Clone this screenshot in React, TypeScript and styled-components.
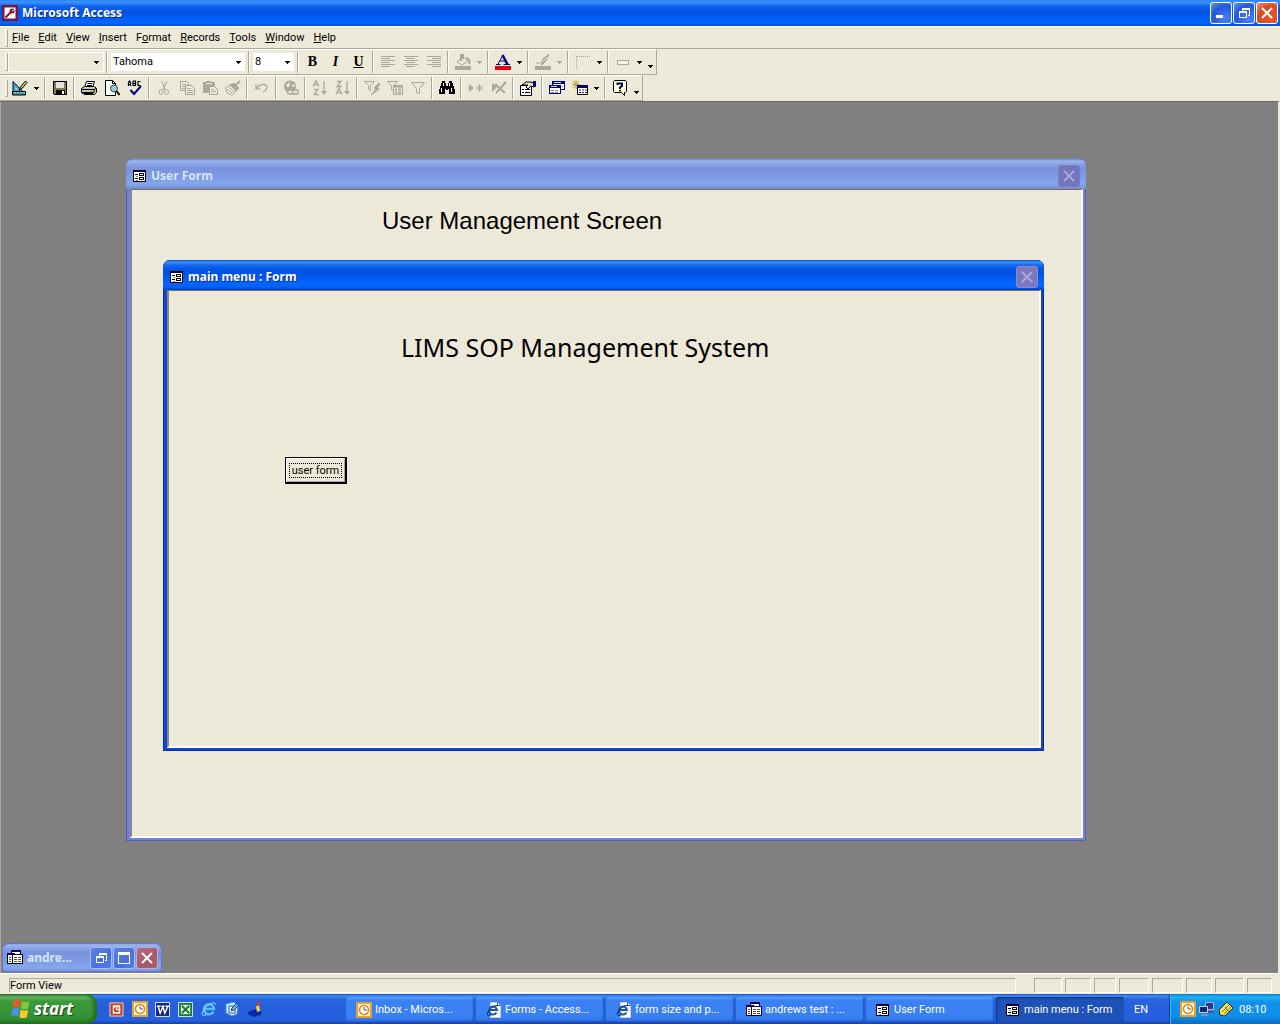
import React from 'react';
import styled, { createGlobalStyle, css } from 'styled-components';

const face = '#ece9d8';
const shade = '#aca899';
const ui = 'Roboto, "Liberation Sans", sans-serif';
const caption = '"Noto Sans", "Open Sans", sans-serif';

const GlobalStyle = createGlobalStyle`
  *, *::before, *::after { box-sizing: border-box; }
  body { margin: 0; font: 11px/14px ${ui}; color: #000; background: ${face}; }
  button, select { font: inherit; color: inherit; }
  svg { display: block; flex: none; }
`;

const Desktop = styled.div`
  display: grid;
  grid-template-rows: auto auto auto auto 1fr auto auto;
  min-height: 100vh;
`;

/* ---------- captions ---------- */

const activeCaption = 'linear-gradient(#0a4ac8 0, #3a95ff 2px, #1768ec 5px, #0054e3 10px, #0055e8 15px, #0366ff 23px, #0462f8 27px, #0040c8 100%)';
const inactiveCaption = 'linear-gradient(#7389d8 0, #9ab6ee 2px, #8fa9e8 4px, #7a95de 9px, #7c97e0 15px, #84a7ec 24px, #7f9ce4 27px, #7886c8 100%)';

const AppCaption = styled.header`
  display: flex;
  align-items: center;
  gap: 4px;
  height: 26px;
  padding: 0 2px;
  background: linear-gradient(#2a83f6 0, #3b96ff 2px, #1464ea 6px, #0054e3 12px, #0366ff 23px, #0048d0 100%);
`;

const CaptionText = styled.h1<{ $faded?: boolean }>`
  flex: 1;
  margin: 0;
  font: bold 12px/16px ${caption};
  color: ${p => (p.$faded ? '#d8e4f8' : '#fff')};
  text-shadow: ${p => (p.$faded ? 'none' : '1px 1px #0a2a80')};
  white-space: nowrap;
`;

const CaptionButtons = styled.div<{ $tight?: boolean }>`
  display: flex;
  gap: ${p => (p.$tight ? 1 : 2)}px;
`;

const tones = {
  blue: css`background: radial-gradient(circle at 75% 80%, #4a80fa, #2458dc 60%, #6a94f2); border-color: #fff;`,
  red: css`background: radial-gradient(circle at 70% 80%, #e85a2c, #d84a20 60%, #f09a80); border-color: #fff;`,
  soft: css`background: linear-gradient(135deg, #5d82e2, #4670e0 60%, #5280ea); border-color: #a8bcf2;`,
  softRed: css`background: linear-gradient(135deg, #b86c82, #a85868 60%, #b05c60); border-color: #b8aade;`,
  off: css`background: #7b78c0; border-color: #8c8ad0;`,
  offFaded: css`background: #7476bc; border-color: #7a7cc4;`,
};

const CaptionButton = styled.button<{ $tone: keyof typeof tones }>`
  display: grid;
  place-items: center;
  width: 22px;
  height: 22px;
  padding: 0;
  border: 1px solid;
  border-radius: 3px;
  ${p => tones[p.$tone]}
`;

/* ---------- menu and tool bars ---------- */

const Strip = styled.div`
  background: ${face};
`;

const MenuBar = styled.nav`
  display: flex;
  align-items: center;
  height: 23px;
  padding-left: 5px;
  border-top: 1px solid #fff;
  border-bottom: 1px solid ${shade};
`;

const Grip = styled.span`
  width: 3px;
  height: 18px;
  border: 1px solid;
  border-color: #fff ${shade} ${shade} #fff;
`;

const MenuItem = styled.button`
  padding: 3px 5px 2px 4px;
  border: 0;
  background: none;
  u { text-underline-offset: 1px; }
`;

const ToolBar = styled.div`
  display: flex;
  align-items: center;
  width: fit-content;
  height: 26px;
  padding-left: 5px;
  border-top: 1px solid #fff;
  border-right: 1px solid ${shade};
  border-bottom: 1px solid ${shade};
`;

const Divider = styled.span`
  width: 2px;
  height: 22px;
  margin: 0 2px;
  border-left: 1px solid ${shade};
  border-right: 1px solid #fff;
`;

const ToolButton = styled.button`
  display: grid;
  place-items: center;
  width: 23px;
  height: 22px;
  padding: 0;
  border: 0;
  background: none;
`;

const Letter = styled.span<{ $kind: 'b' | 'i' | 'u' }>`
  font: bold 14px/16px "Liberation Serif", serif;
  font-style: ${p => (p.$kind === 'i' ? 'italic' : 'normal')};
  text-decoration: ${p => (p.$kind === 'u' ? 'underline' : 'none')};
`;

const DropButton = styled.button<{ $low?: boolean }>`
  display: grid;
  place-items: center;
  width: 11px;
  height: 22px;
  padding: ${p => (p.$low ? '8px 0 0' : '0')};
  border: 0;
  background: none;
`;

const Combo = styled.label<{ $size: number; $empty?: boolean }>`
  display: flex;
  align-items: center;
  width: ${p => p.$size}px;
  height: 20px;
  padding-right: 4px;
  border: 1px solid ${p => (p.$empty ? '#fff' : face)};
  background: ${p => (p.$empty ? face : '#fff')};
  select {
    flex: 1;
    min-width: 0;
    padding: 0 2px;
    border: 0;
    appearance: none;
    background: none;
  }
`;

/* ---------- MDI area ---------- */

const Workspace = styled.main`
  position: relative;
  min-height: 600px;
  background: #808080;
  border: 1px solid #6e6c64;
  border-left-color: ${shade};
  border-right: 2px solid ${face};
  border-bottom: 0;
  overflow: hidden;
`;

const Frame = styled.section<{ $x: number; $y: number; $w: number; $h: number; $active?: boolean }>`
  position: absolute;
  left: ${p => p.$x}px;
  top: ${p => p.$y}px;
  width: ${p => p.$w}px;
  height: ${p => p.$h}px;
  display: flex;
  flex-direction: column;
  padding: 0 3px 3px 4px;
  border-radius: 7px 7px 0 0;
  background: ${p => (p.$active ? '#0f46d8' : '#7480dc')};
  box-shadow: inset 0 0 0 1px ${p => (p.$active ? '#0a2ca0' : '#5560b4')};
`;

const FrameCaption = styled.header<{ $active?: boolean }>`
  display: flex;
  align-items: center;
  gap: 5px;
  flex: none;
  height: 30px;
  margin: 0 -3px 0 -4px;
  padding: 3px 6px 0 7px;
  border-radius: 7px 7px 0 0;
  background: ${p => (p.$active ? activeCaption : inactiveCaption)};
`;

const Surface = styled.div`
  flex: 1;
  background: ${face};
  border: 1px solid #716f64;
  border-left-width: 2px;
  border-left-color: #8a8880;
  border-right: 2px solid #fff;
  border-bottom: 2px solid #fff;
`;

const UserFormBody = styled(Surface)`
  padding: 15px 0 0 250px;
`;

const MenuFormBody = styled(Surface)`
  display: flex;
  flex-direction: column;
  align-items: flex-start;
  gap: 92px;
  padding: 38px 0 0 116px;
`;

const UserHeading = styled.h2`
  margin: 0;
  font: 24px/32px "Liberation Sans", Arial, sans-serif;
`;

const MenuHeading = styled.h2`
  margin: 0 0 0 116px;
  font: 25px/36px ${caption};
`;

const PushButton = styled.button`
  width: 62px;
  height: 27px;
  padding: 3px 3px 2px;
  border: 1px solid #000;
  border-right-width: 2px;
  border-bottom-width: 2px;
  background: ${face};
  box-shadow: inset 1px 1px #fff, inset -1px -1px ${shade};
  span {
    display: block;
    border: 1px dotted #000;
    line-height: 13px;
    white-space: nowrap;
  }
`;

const Minimized = styled.section`
  position: absolute;
  left: 1px;
  bottom: 1px;
  display: flex;
  align-items: center;
  gap: 4px;
  width: 160px;
  height: 29px;
  padding: 0 4px 0 5px;
  border-radius: 7px 7px 4px 4px;
  background: ${inactiveCaption};
  box-shadow: inset 0 0 0 1px #6674cc;
`;

/* ---------- status bar ---------- */

const StatusBar = styled.footer`
  display: flex;
  gap: 3px;
  height: 21px;
  padding: 4px 8px 1px 9px;
  border-top: 1px solid #fff;
  background: ${face};
`;

const Panel = styled.span<{ $size?: number }>`
  flex: ${p => (p.$size ? `0 0 ${p.$size}px` : '1')};
  margin-right: ${p => (p.$size ? 0 : 15)}px;
  border: 1px solid;
  border-color: ${shade} #fff #fff ${shade};
`;

/* ---------- task bar ---------- */

const TaskBar = styled.footer`
  display: flex;
  height: 30px;
  color: #fff;
  background: linear-gradient(#1f4fc0 0, #3f8cf3 2px, #2a65e0 5px, #245edb 15px, #2562df 26px, #1941a5 100%);
`;

const StartButton = styled.button`
  display: flex;
  align-items: center;
  gap: 4px;
  width: 97px;
  padding: 0 0 1px 10px;
  border: 0;
  border-radius: 0 10px 10px 0;
  background: linear-gradient(#2f7a30 0, #66b566 3px, #3d9a3c 7px, #359435 20px, #2f8a2e 26px, #226b22 100%);
  box-shadow: inset -3px 0 4px #21691f;
  font: italic bold 17px/20px ${caption};
  text-shadow: 1px 1px 1px #173f16;
`;

const QuickLaunch = styled.div`
  display: flex;
  align-items: center;
  width: 249px;
  padding-left: 8px;
`;

const LaunchButton = styled.button`
  display: grid;
  place-items: center;
  width: 23px;
  height: 24px;
  padding: 0;
  border: 0;
  background: none;
`;

const Tasks = styled.div`
  display: flex;
  flex: 1;
  gap: 2px;
  min-width: 0;
  padding: 3px 0 2px;
`;

const Task = styled.button<{ $active?: boolean }>`
  display: flex;
  align-items: center;
  gap: 3px;
  flex: 0 1 128px;
  min-width: 0;
  padding: 0 8px 0 10px;
  border: 0;
  border-radius: 3px;
  overflow: hidden;
  white-space: nowrap;
  background: ${p => (p.$active ? '#1e52b7' : 'linear-gradient(#5a9bff 0, #3c81f3 4px, #3980f4 20px, #2f6fe0 100%)')};
  box-shadow: ${p => (p.$active ? 'inset 1px 1px 2px #0e2f7c' : 'inset -1px -1px 1px #2357c8')};
`;

const SmallIcon = styled.span`
  margin-right: 2px;
`;

const Language = styled.span`
  width: 45px;
  padding: 9px 0 0 10px;
`;

const Tray = styled.div`
  display: flex;
  align-items: center;
  gap: 3px;
  width: 111px;
  padding-left: 10px;
  border-left: 1px solid #0f3d9c;
  background: linear-gradient(#0d79c8 0, #1cb4f6 3px, #1290e9 8px, #0f8eea 22px, #0b6cc4 100%);
  box-shadow: inset 1px 0 #3ab8f8;
  time { margin: 2px 0 0 2px; }
`;

/* ---------- drawings ---------- */

const grey = '#aca899';
const navy = '#000080';

type ArtProps = { children: React.ReactNode; s?: number; smooth?: boolean };
const Art = ({ children, s = 16, smooth }: ArtProps) => (
  <svg width={s} height={s} viewBox="0 0 16 16" fill="none" shapeRendering={smooth ? 'auto' : 'crispEdges'} aria-hidden="true">
    {children}
  </svg>
);

const Caret = ({ c = '#000' }: { c?: string }) => (
  <svg width="5" height="3" viewBox="0 0 5 3" shapeRendering="crispEdges" aria-hidden="true">
    <path d="M0 0h5v1H4v1H3v1H2V2H1V1H0z" fill={c} />
  </svg>
);

const Cross = ({ c = '#fff' }: { c?: string }) => (
  <Art smooth><path d="M3 3l10 10M13 3L3 13" stroke={c} strokeWidth="2" /></Art>
);
const MinGlyph = () => <Art><path d="M3 10h7v3H3z" fill="#fff" /></Art>;
const MaxGlyph = () => <Art><path d="M2.500 3v10.500h11V3" stroke="#fff" /><path d="M2 2h12v3H2z" fill="#fff" /></Art>;
const RestoreGlyph = () => (
  <Art><path d="M6 3h8v2H6zM13 5h1v6h-2v-1h1zM6 5h1v1H6zM3 6h8v2H3zM3 8h1v4h6V8h1v5H3z" fill="#fff" /></Art>
);

const KeyIcon = () => (
  <Art smooth>
    <path d="M0 0h16v16H0z" fill="#7c1440" />
    <path d="M2.500 2.500h11v11h-11z" fill="#fff" />
    <circle cx="10" cy="6" r="2.500" fill="#7c1440" /><path d="M8.500 7.500l-5 5" stroke="#7c1440" strokeWidth="2" />
    <path d="M10 5.500h1.500" stroke="#fff" />
  </Art>
);
const FormIcon = () => (
  <svg width="13" height="12" viewBox="0 0 13 12" shapeRendering="crispEdges" fill="none" aria-hidden="true">
    <path d="M.500 .500h12v11H.500z" fill="#fff" stroke="#000" /><path d="M1 1h11v1H1z" fill="#000060" />
    <path d="M2 4.500h3M2 8.500h3" stroke="#000" /><path d="M3 6.500h2M3 10.500h2" stroke="#888" />
    <path d="M6.500 3.500h4v2h-4zM6.500 7.500h4v2h-4z" stroke="#000" />
  </svg>
);
const DbIcon = () => (
  <Art>
    <path d="M4.500 .500h9v8h-9z" fill="#fff" stroke="#000" /><path d="M4 0h10v2H4z" fill="#000060" />
    <path d="M.500 3.500h7v10h-7z" fill="#fff" stroke="#000" /><path d="M0 3h8v2H0z" fill="#000060" />
    <path d="M5.500 4.500h10v9h-10z" fill="#fff" stroke="#000" /><path d="M5 4h11v1H5z" fill="#000060" />
    <path d="M2 7.500h2M2 9.500h2M2 11.500h2M7 7.500h3M11 7.500h3M7 9.500h3M11 9.500h3M7 11.500h3M11 11.500h3" stroke="#444" />
  </Art>
);
const DbWindow = () => (
  <Art>
    <path d="M3.500 1.500h12v8h-12z" fill="#fff" stroke={navy} /><path d="M3 1h13v3H3z" fill={navy} /><path d="M5 2.500h7" stroke="#d8dcf0" />
    <path d="M.500 5.500h11v8H.500z" fill="#fff" stroke={navy} /><path d="M0 5h12v3H0z" fill={navy} /><path d="M2 6.500h6" stroke="#d8dcf0" />
    <path d="M2 10.500h3M6 10.500h3M2 12.500h3M6 12.500h3M13 6.500h1" stroke="#888" />
  </Art>
);

const Design = () => (
  <Art smooth>
    <path d="M1 1.500l10 10H1z" fill="#40a8b0" stroke={navy} /><path d="M3.500 7l2.500 2.500H3.500z" fill={face} />
    <path d="M.500 11.500h13v3.500H.500z" fill="#308898" stroke="#000" /><path d="M3 12v1.500M6 12v1.500M9 12v1.500M12 12v1.500" stroke="#fff" />
    <path d="M13.500 1L8.500 7l-1 3 3-2L15 2.500z" fill="#d8d060" stroke="#000" />
  </Art>
);
const Save = () => (
  <Art><path d="M1.500 1.500h13v13h-12l-1-1z" fill="#808040" stroke="#000" /><path d="M4 2h8v6H4z" fill="#e4e4e0" /><path d="M4 10h9v4H4z" fill="#000" /><path d="M10 11h2v3h-2z" fill="#fff" /></Art>
);
const Print = () => (
  <Art smooth>
    <path d="M5.500 1.500h8l-2 6h-8z" fill="#fff" stroke="#000" /><path d="M6.500 3.500h5M6 5.500h5" stroke="#000" />
    <path d="M.500 8.500l3-2h10l2 2v4l-2 2h-10l-3-2z" fill="#c8c8c0" stroke="#000" />
    <path d="M1 9.500h12v3H1M13 9.500l2-1M3 13.500h9" stroke="#000" /><path d="M9 11h2" stroke="#c8c000" strokeWidth="2" />
  </Art>
);
const Preview = () => (
  <Art smooth>
    <path d="M1.500 .500h7l3 3v12h-10z" fill="#fff" stroke="#000" /><path d="M8.500 .500v3h3" stroke="#000" />
    <circle cx="10" cy="8.500" r="3.500" fill="#98c8d0" stroke="#404848" /><path d="M12.500 11l3 4" stroke="#000" strokeWidth="2" />
  </Art>
);
const Spell = () => (
  <Art smooth>
    <path d="M1.500 6V2.500L2.500 1l1 1.500V6M1.500 4.500h2M6 1v4.500h2.500V1H6M6 3.500h2.500M13.500 1.500H11v4h2.500" stroke="#000" strokeWidth="1.200" />
    <path d="M3.500 10l3.500 4 7-8" stroke={navy} strokeWidth="2" />
  </Art>
);
const Cut = () => (
  <Art smooth><path d="M6 1l3 9M11 1L7 10" stroke={grey} /><ellipse cx="5" cy="12" rx="2" ry="2.500" stroke={grey} /><ellipse cx="10.500" cy="12" rx="2" ry="2.500" stroke={grey} /></Art>
);
const Copy = () => (
  <Art><path d="M1.500 1.500h6l2 2v7h-8z" stroke={grey} /><path d="M6.500 5.500h6l3 3v6h-9z" fill={face} stroke={grey} /><path d="M3 4.500h4M3 6.500h3M3 8.500h3M8 8.500h4M8 10.500h6M8 12.500h6" stroke={grey} /></Art>
);
const Paste = () => (
  <Art><path d="M1 2h3V1h5v1h4v11H1z" fill={grey} /><path d="M4 3.500h6" stroke={face} /><path d="M7.500 6.500h5l3 3v5h-8z" fill={face} stroke={grey} /><path d="M9 9.500h3M9 11.500h5" stroke={grey} /></Art>
);
const Brush = () => (
  <Art smooth><path d="M15 1l-5 5M9 4l4 4-2 2-5-5z" fill={grey} stroke={grey} strokeWidth="2" /><path d="M5 5l6 6-4 4-5-2-2-5zM2 9l5 4M4 7l5 5" fill={face} stroke={grey} /></Art>
);
const Undo = () => <Art smooth><path d="M2 4v5h5M2.500 8.500C5 4 12 3 13 7c0 3-2 4-4 5" stroke={grey} strokeWidth="1.200" /></Art>;
const Globe = () => (
  <Art smooth>
    <circle cx="7" cy="6.500" r="6" fill={grey} /><path d="M3 5l3-3 1 3-2 3zM8 6l3-2 1 3" fill={face} />
    <rect x="4.500" y="10" width="6" height="4" rx="2" fill={face} stroke={grey} strokeWidth="1.500" /><rect x="9.500" y="10" width="6" height="4" rx="2" fill={face} stroke={grey} strokeWidth="1.500" />
  </Art>
);
const Sort = ({ down }: { down?: boolean }) => (
  <Art smooth>
    {down
      ? <path d="M2 1.500h4L2 6.500h5M1 14.500L4 8l3 6.500M2.500 12.500h3" stroke={grey} strokeWidth="1.300" />
      : <path d="M1 6.500L4 .500l3 6M2.500 4.500h3M2 9.500h4l-4 5h5" stroke={grey} strokeWidth="1.300" />}
    <path d="M12 1v12" stroke={grey} strokeWidth="1.300" /><path d="M9 11h6l-3 4z" fill={grey} />
  </Art>
);
const FilterSel = () => <Art smooth><path d="M.500 1.500h10l-4 4v5l-2-1v-4z" stroke={grey} /><path d="M15 3l-5 5 2 1-5 6 8-6-2-1 3-4z" fill={grey} stroke={grey} /></Art>;
const FilterForm = () => <Art smooth><path d="M.500 1.500h10l-4 4v5l-2-1v-4z" stroke={grey} /><path d="M6.500 5.500h9v9h-9z" fill={face} stroke={grey} /><path d="M6 6.500h9M8 9.500h2M11 9.500h3M8 12.500h2M11 12.500h3" stroke={grey} strokeWidth="2" /></Art>;
const Filter = () => <Art smooth><path d="M1.500 2.500h13l-5 6v5l-3-1v-4z" stroke={grey} /></Art>;
const Find = () => (
  <Art>
    <path d="M3 1h3v2h1v3h2V3h1V1h3v2h1v3h1v3h1v5h-6V9H9v1H7V9H6v5H0V9h1V6h1V3h1z" fill="#000" />
    <path d="M4.500 3v3M2.500 8v4M10.500 3v3M12.500 8v4" stroke="#fff" />
  </Art>
);
const NewRec = () => <Art smooth><path d="M1 4l5 4-5 4z" fill={grey} /><path d="M11.500 4v8M8 8h7M9 5.500l5 5M14 5.500l-5 5" stroke={grey} /></Art>;
const DelRec = () => <Art smooth><path d="M1 3l5 4-5 5z" fill={grey} /><path d="M4 4l10 9M15 2L5 13" stroke={grey} strokeWidth="2" /></Art>;
const Props = () => (
  <Art smooth>
    <path d="M.500 5.500h11v10H.500z" fill="#fff" stroke="#000" /><path d="M2 9.500h2M5 9.500h5M2 12.500h2M5 12.500h5" stroke="#000" />
    <path d="M2 5l4-3h4l4 1v4l-3-1-3 3-2-2 2-2z" fill="#e8e8d0" stroke="#000" /><path d="M13 1h3v6h-3z" fill={navy} />
  </Art>
);
const NewObj = () => (
  <Art smooth>
    <path d="M4 0v9M0 4.500h8M1 1l6 7M7 1L1 8" stroke="#b0a020" />
    <path d="M5.500 5.500h10v9h-10z" fill="#fff" stroke="#000" /><path d="M5 5h11v3H5z" fill={navy} /><path d="M7 10h2M10 10h2M13 10h2M7 12.500h2M10 12.500h2M13 12.500h2" stroke="#333" />
  </Art>
);
const HelpIcon = () => (
  <Art smooth>
    <path d="M2.500 .500h11l1 1v10l-1 1h-1v3l-3-3h-7l-1-1v-10z" fill="#ffffd8" stroke="#000" />
    <path d="M5.500 5V3.500h4.500v2.500L8 7.500V9" stroke="#000060" strokeWidth="2" /><path d="M7 10h2v1.500H7z" fill="#000060" />
  </Art>
);
const Align = ({ k }: { k: number }) => (
  <Art>{[2, 4, 6, 8, 10, 12].map((y, i) => {
    const w = i % 2 ? 9 : 14;
    const x = 1 + ((14 - w) * k) / 2;
    return <path key={y} d={`M${Math.floor(x)} ${y + 0.5}h${w}`} stroke={grey} />;
  })}</Art>
);
const Bucket = () => <Art smooth><path d="M2 8l6-6 5 5-6 4z" fill={face} stroke={grey} /><path d="M6 7V1h2v4M11 4c4 1 4 4 3 6" stroke={grey} strokeWidth="2" /><path d="M0 12h16v4H0z" fill={grey} /></Art>;
const FontColor = () => <Art smooth><path d="M1 10.500h4.500M8.500 10.500H15M3 10L8 1M5 7h6" stroke={navy} /><path d="M7.500 1l5 9.500" stroke={navy} strokeWidth="2.500" /><path d="M0 12h16v4H0z" fill="#e00010" /></Art>;
const LineColor = () => <Art smooth><path d="M6 10l2-5 6-5-3 7-4 4z" fill={grey} stroke={grey} /><path d="M8 8l4-5" stroke={face} /><path d="M1 9h4" stroke={grey} /><path d="M0 12h16v4H0z" fill={grey} /></Art>;
const BorderIcon = () => <Art><path d="M1.500 2v13M2 2.500h13" stroke={grey} strokeDasharray="1 1" /></Art>;
const EffectIcon = () => <Art><path d="M2.500 6.500h11v4h-11z" stroke={grey} fill="#f6f4ea" /></Art>;

const Flag = () => (
  <Art s={20} smooth>
    <path d="M3 1c2-1 4-1 5.500 0L7.500 7C6 6 4 6 2 7z" fill="#f0562c" /><path d="M9.500 1.500c2 1 4 1 6 0l-1 6c-2 1-4 1-6 0z" fill="#7cc83c" />
    <path d="M2 8c2-1 4-1 5.500 0L6.500 14c-1.500-1-3.500-1-5.500 0z" fill="#4a90f0" /><path d="M8.500 8.500c2 1 4 1 6 0l-1 6c-2 1-4 1-6 0z" fill="#fcc828" />
  </Art>
);
const Clock = () => (
  <Art smooth><path d="M1 1h14v14H1z" fill="#fff4d0" stroke="#e8a030" strokeWidth="2" /><circle cx="8" cy="8" r="4.500" fill="#fff" stroke="#d08820" strokeWidth="1.500" /><path d="M8 5v3h3" stroke="#805010" /></Art>
);
const Ppt = () => (
  <Art s={15} smooth><path d="M1 1h14v14H1z" fill="#c8401c" stroke="#f4d8c8" /><path d="M4 3.500h8v9H4z" fill="#fff" /><circle cx="8" cy="8" r="3" fill="#c8401c" /><path d="M8 8V4M8 8h4" stroke="#fff" strokeWidth="1.500" /></Art>
);
const Word = () => (
  <Art s={15} smooth><path d="M.500 .500h15v15H.500z" fill="#102a80" stroke="#e8ecff" /><path d="M2 4.500h4M7 4.500h3M11 4.500h4M3.500 5l2 7 3-7 2 7 3-7" stroke="#fff" strokeWidth="1.500" /></Art>
);
const Excel = () => (
  <Art s={15} smooth><path d="M.500 .500h15v15H.500z" fill="#187838" stroke="#d8f0d8" /><path d="M3 3h10v10H3z" fill="#e8f8e8" /><path d="M4 4l8 8M12 4l-8 8" stroke="#187838" strokeWidth="2" /></Art>
);
const IE = () => (
  <Art smooth><path d="M12.500 10.500A5 5 0 1 1 13 8H4" stroke="#58c0f8" strokeWidth="2.500" /><path d="M14.500 4C15 0 8 2 4 7s-4 9 1 7" stroke="#90dcff" /></Art>
);
const ShowDesktop = () => (
  <Art smooth><path d="M2 3l8-2 4 4-1 8-5 2-6-3z" fill="#c8ecfc" stroke="#4890d8" /><path d="M5 5h6v7H5z" fill="#fff" stroke="#205898" /><path d="M7 10l1-3 5-5 2 2-5 5z" fill="#58b0f0" stroke="#204080" /></Art>
);
const Painter = () => (
  <Art smooth><path d="M1 11l8-3 6 3-1 3-8 2-5-3z" fill="#0828a8" /><path d="M9 5l3-1 1 6-3 1z" fill="#f8d830" /><path d="M10 1l3-1v4l-3 1z" fill="#d83820" /></Art>
);
const IEPage = () => (
  <Art smooth><path d="M4.500 .500h7l3 3v12h-10z" fill="#fff" stroke="#c8d0e0" /><path d="M11.500 .500v3h3" stroke="#405080" /><path d="M10.500 10.500a4 4 0 1 1 .5-2.500H4" stroke="#1858b8" strokeWidth="2" /><path d="M12 4C10 2 4 6 2 10s1 4 3 3" stroke="#102858" /></Art>
);
const Network = () => (
  <Art smooth><path d="M6.500 1.500h8v7h-8z" fill="#283890" stroke="#b0b8d8" /><path d="M8 10h7v2H8z" fill="#505878" /><path d="M.500 5.500h8v6h-8z" fill="#182878" stroke="#c8d0e8" /><path d="M2 13h7v2H2z" fill="#8890b0" /></Art>
);
const Tag = () => (
  <Art smooth><path d="M1 9l8-8 6 6-8 8-5-1z" fill="#f0e060" stroke="#303010" /><path d="M4 11l7-7M6 13l7-7M7 6l4 5" stroke="#807820" /></Art>
);

/* ---------- content ---------- */

const menus = [['', 'F', 'ile'], ['', 'E', 'dit'], ['', 'V', 'iew'], ['', 'I', 'nsert'], ['F', 'o', 'rmat'], ['', 'R', 'ecords'], ['', 'T', 'ools'], ['', 'W', 'indow'], ['', 'H', 'elp']];

const Tool = ({ name, children }: { name: string; children: React.ReactNode }) => (
  <ToolButton type="button" aria-label={name}>{children}</ToolButton>
);
const Drop = ({ name, off, low }: { name: string; off?: boolean; low?: boolean }) => (
  <DropButton type="button" aria-label={name} $low={low}><Caret c={off ? grey : '#000'} /></DropButton>
);

const quick: [string, React.ReactNode][] = [
  ['PowerPoint', <Ppt />], ['Outlook', <Clock />], ['Word', <Word />], ['Excel', <Excel />],
  ['Internet Explorer', <IE />], ['Show Desktop', <ShowDesktop />], ['Paint', <Painter />],
];
const tasks: [string, React.ReactNode][] = [
  ['Inbox - Micros...', <Clock />], ['Forms - Access...', <IEPage />], ['form size and p...', <IEPage />],
  ['andrews test : ...', <DbIcon />],
  ['User Form', <SmallIcon><FormIcon /></SmallIcon>],
  ['main menu : Form', <SmallIcon><FormIcon /></SmallIcon>],
];

export default function App() {
  return (
    <Desktop>
      <GlobalStyle />
      <AppCaption>
        <KeyIcon />
        <CaptionText>Microsoft Access</CaptionText>
        <CaptionButtons $tight>
          <CaptionButton $tone="blue" aria-label="Minimize"><MinGlyph /></CaptionButton>
          <CaptionButton $tone="blue" aria-label="Restore"><RestoreGlyph /></CaptionButton>
          <CaptionButton $tone="red" aria-label="Close"><Cross /></CaptionButton>
        </CaptionButtons>
      </AppCaption>

      <MenuBar>
        <Grip />
        {menus.map(([a, b, c]) => (
          <MenuItem key={c} type="button">{a}<u>{b}</u>{c}</MenuItem>
        ))}
      </MenuBar>

      <Strip>
        <ToolBar>
          <Grip />
          <Combo $size={96} $empty><select disabled aria-label="Object" /><Caret /></Combo>
          <Divider />
          <Combo $size={136}><select aria-label="Font"><option>Tahoma</option></select><Caret /></Combo>
          <Divider />
          <Combo $size={43}><select aria-label="Font size"><option>8</option></select><Caret /></Combo>
          <Divider />
          <Tool name="Bold"><Letter $kind="b">B</Letter></Tool>
          <Tool name="Italic"><Letter $kind="i">I</Letter></Tool>
          <Tool name="Underline"><Letter $kind="u">U</Letter></Tool>
          <Divider />
          <Tool name="Align left"><Align k={0} /></Tool>
          <Tool name="Center"><Align k={1} /></Tool>
          <Tool name="Align right"><Align k={2} /></Tool>
          <Divider />
          <Tool name="Fill colour"><Bucket /></Tool><Drop name="Fill colours" off />
          <Divider />
          <Tool name="Font colour"><FontColor /></Tool><Drop name="Font colours" />
          <Divider />
          <Tool name="Line colour"><LineColor /></Tool><Drop name="Line colours" off />
          <Divider />
          <Tool name="Border"><BorderIcon /></Tool><Drop name="Borders" />
          <Divider />
          <Tool name="Effect"><EffectIcon /></Tool><Drop name="Effects" />
          <Drop name="More formatting" low />
        </ToolBar>
      </Strip>

      <Strip>
        <ToolBar>
          <Grip />
          <Tool name="Design view"><Design /></Tool><Drop name="Views" />
          <Divider />
          <Tool name="Save"><Save /></Tool>
          <Divider />
          <Tool name="Print"><Print /></Tool>
          <Tool name="Print preview"><Preview /></Tool>
          <Tool name="Spelling"><Spell /></Tool>
          <Divider />
          <Tool name="Cut"><Cut /></Tool>
          <Tool name="Copy"><Copy /></Tool>
          <Tool name="Paste"><Paste /></Tool>
          <Tool name="Format painter"><Brush /></Tool>
          <Divider />
          <Tool name="Undo"><Undo /></Tool>
          <Divider />
          <Tool name="Hyperlink"><Globe /></Tool>
          <Divider />
          <Tool name="Sort ascending"><Sort /></Tool>
          <Tool name="Sort descending"><Sort down /></Tool>
          <Divider />
          <Tool name="Filter by selection"><FilterSel /></Tool>
          <Tool name="Filter by form"><FilterForm /></Tool>
          <Tool name="Apply filter"><Filter /></Tool>
          <Divider />
          <Tool name="Find"><Find /></Tool>
          <Divider />
          <Tool name="New record"><NewRec /></Tool>
          <Tool name="Delete record"><DelRec /></Tool>
          <Divider />
          <Tool name="Properties"><Props /></Tool>
          <Divider />
          <Tool name="Database window"><DbWindow /></Tool>
          <Tool name="New object"><NewObj /></Tool><Drop name="New objects" />
          <Divider />
          <Tool name="Help"><HelpIcon /></Tool>
          <Drop name="More tools" low />
        </ToolBar>
      </Strip>

      <Workspace>
        <Frame $x={125} $y={57} $w={960} $h={682}>
          <FrameCaption>
            <FormIcon />
            <CaptionText as="h2" $faded>User Form</CaptionText>
            <CaptionButton $tone="offFaded" aria-label="Close" disabled><Cross c="#a8a8e0" /></CaptionButton>
          </FrameCaption>
          <UserFormBody>
            <UserHeading>User Management Screen</UserHeading>
          </UserFormBody>
        </Frame>

        <Frame $x={162} $y={158} $w={881} $h={491} $active>
          <FrameCaption $active>
            <FormIcon />
            <CaptionText as="h2">main menu : Form</CaptionText>
            <CaptionButton $tone="off" aria-label="Close" disabled><Cross c="#b0a8d8" /></CaptionButton>
          </FrameCaption>
          <MenuFormBody>
            <MenuHeading>LIMS SOP Management System</MenuHeading>
            <PushButton type="button"><span>user form</span></PushButton>
          </MenuFormBody>
        </Frame>

        <Minimized>
          <DbIcon />
          <CaptionText as="h2" $faded>andre...</CaptionText>
          <CaptionButtons $tight>
            <CaptionButton $tone="soft" aria-label="Restore"><RestoreGlyph /></CaptionButton>
            <CaptionButton $tone="soft" aria-label="Maximize"><MaxGlyph /></CaptionButton>
            <CaptionButton $tone="softRed" aria-label="Close"><Cross /></CaptionButton>
          </CaptionButtons>
        </Minimized>
      </Workspace>

      <StatusBar>
        <Panel>Form View</Panel>
        {[28, 26, 22, 30, 31, 26, 29, 25].map((w, i) => <Panel key={i} $size={w} />)}
      </StatusBar>

      <TaskBar>
        <StartButton type="button"><Flag />start</StartButton>
        <QuickLaunch>
          {quick.map(([name, icon]) => <LaunchButton key={name} type="button" aria-label={name}>{icon}</LaunchButton>)}
        </QuickLaunch>
        <Tasks>
          {tasks.map(([name, icon], i) => <Task key={name} type="button" $active={i === 5}>{icon}{name}</Task>)}
        </Tasks>
        <Language>EN</Language>
        <Tray>
          <Clock /><Network /><Tag />
          <time>08:10</time>
        </Tray>
      </TaskBar>
    </Desktop>
  );
}
